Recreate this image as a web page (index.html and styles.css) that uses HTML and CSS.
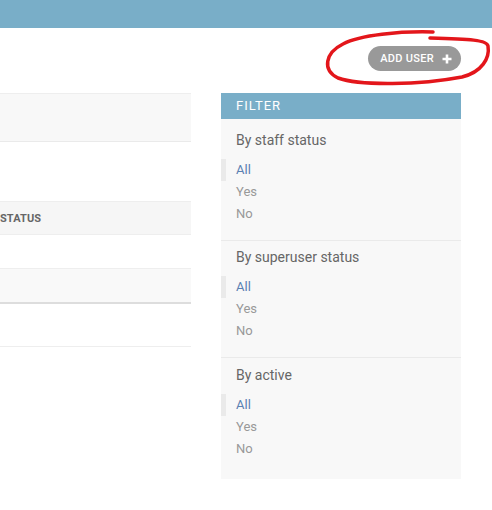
FILE: index.html
```html
<!DOCTYPE html>
<html lang="en">
<head>
<meta charset="utf-8">
<title>Select user to change</title>
<link rel="stylesheet" href="styles.css">
</head>
<body>
<header class="topbar"></header>
<main class="content">
  <div class="object-tools">
    <a class="addlink" href="#">ADD USER
      <svg class="plus" width="10" height="10" viewBox="0 0 10 10"><path d="M5 0.5v9M0.5 5h9" stroke="#fff" stroke-width="2.6"/></svg>
    </a>
  </div>
  <div class="columns">
    <div class="changelist">
      <div class="toolbar"></div>
      <div class="actions"></div>
      <div class="thead"><span class="th">STATUS</span></div>
      <div class="row"></div>
      <div class="row alt"></div>
      <div class="paginator"></div>
    </div>
    <aside class="filter">
      <h2 class="filter-title">Filter</h2>
      <section class="group">
        <h3 class="group-title">By staff status</h3>
        <ul class="choices">
          <li class="selected"><a href="#">All</a></li>
          <li><a href="#">Yes</a></li>
          <li><a href="#">No</a></li>
        </ul>
      </section>
      <section class="group">
        <h3 class="group-title">By superuser status</h3>
        <ul class="choices">
          <li class="selected"><a href="#">All</a></li>
          <li><a href="#">Yes</a></li>
          <li><a href="#">No</a></li>
        </ul>
      </section>
      <section class="group last">
        <h3 class="group-title">By active</h3>
        <ul class="choices">
          <li class="selected"><a href="#">All</a></li>
          <li><a href="#">Yes</a></li>
          <li><a href="#">No</a></li>
        </ul>
      </section>
    </aside>
  </div>
</main>
<svg class="scribble" width="492" height="510" viewBox="0 0 492 510">
  <path d="M433 32 C400 31 360 35 343 44 C325 53 322 70 338 78 C360 86 420 85 462 77 C482 72 490 58 488 46 C487 40 470 39 430 38" fill="none" stroke="#e3161b" stroke-width="3.5" stroke-linecap="round" stroke-linejoin="round"/>
</svg>
</body>
</html>
```
FILE: styles.css
```css
html, body {
  margin: 0;
  padding: 0;
  background: #fff;
  font-family: Roboto, "Liberation Sans", sans-serif;
  color: #333;
  overflow: hidden;
}

.topbar {
  height: 28px;
  background: #79aec8;
}

.content {
  padding: 18px 31px 0 0;
}

.object-tools {
  display: flex;
  justify-content: flex-end;
  height: 25px;
  margin-bottom: 22px;
}

.addlink {
  display: flex;
  align-items: center;
  gap: 8px;
  height: 25px;
  box-sizing: border-box;
  padding: 0 9px 0 12px;
  border-radius: 13px;
  background: #999;
  color: #fff;
  font-size: 11px;
  font-weight: 500;
  letter-spacing: 0.3px;
  text-decoration: none;
}

.plus {
  display: block;
}

.columns {
  display: flex;
  gap: 30px;
  align-items: flex-start;
}

.changelist {
  width: 191px;
  flex: none;
}

.toolbar {
  height: 47px;
  background: #f8f8f8;
  border-top: 1px solid #eee;
  border-bottom: 1px solid #eaeaea;
}

.actions {
  height: 59px;
}

.thead {
  height: 32px;
  background: #f6f6f6;
  border-top: 1px solid #eee;
  border-bottom: 1px solid #eee;
  display: flex;
  align-items: center;
}

.th {
  font-size: 11px;
  font-weight: 700;
  color: #666;
  letter-spacing: 0.1px;
}

.row {
  height: 33px;
  border-bottom: 1px solid #eee;
}

.row.alt {
  background: #f9f9f9;
  border-bottom: 2px solid #ddd;
  height: 33px;
}

.paginator {
  height: 42px;
  border-bottom: 1px solid #eee;
}

.filter {
  width: 240px;
  flex: none;
  background: #f8f8f8;
}

.filter-title {
  margin: 0;
  padding: 5px 15px;
  background: #79aec8;
  color: #fff;
  font-size: 13px;
  line-height: 16px;
  font-weight: 400;
  letter-spacing: 1px;
  text-transform: uppercase;
}

.group {
  border-bottom: 1px solid #eaeaea;
  padding-top: 7px;
}

.group:first-of-type {
  padding-top: 12px;
}

.group.last {
  border-bottom: none;
  padding-top: 8px;
}

.group-title {
  margin: 0 0 10px;
  padding: 0 15px;
  font-size: 14px;
  line-height: 18px;
  font-weight: 400;
  color: #666;
}

.choices {
  list-style: none;
  margin: 0;
  padding: 0 15px 15px;
}

.group.last .choices {
  padding-bottom: 19px;
}

.choices li {
  font-size: 13px;
  line-height: 22px;
}

.choices a {
  display: block;
  color: #999;
  text-decoration: none;
}

.choices li.selected {
  border-left: 5px solid #eaeaea;
  padding-left: 10px;
  margin-left: -15px;
}

.choices li.selected a {
  color: #5b80b2;
}

.scribble {
  position: absolute;
  top: 0;
  left: 0;
  pointer-events: none;
}
```
